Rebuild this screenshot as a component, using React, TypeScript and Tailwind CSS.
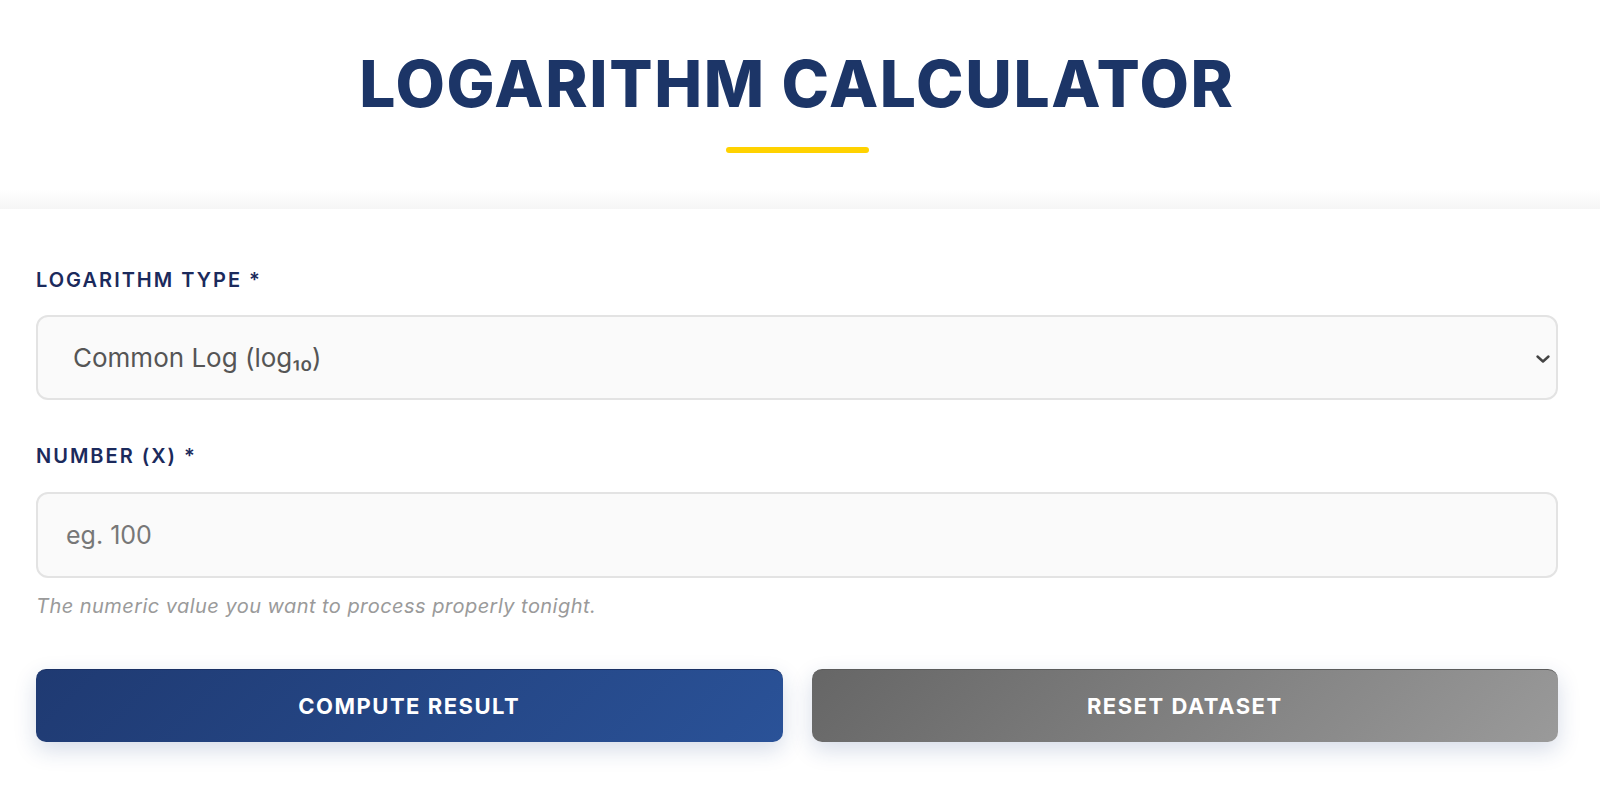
import React from "react";

export default function App() {
  const font = { fontFamily: "Inter, 'Noto Sans', sans-serif" } as React.CSSProperties;
  return (
    <div className="min-h-[791px] w-full bg-white" style={font}>
      <header className="h-[209px] bg-gradient-to-b from-white from-[91%] to-[#f5f5f5]">
        <div className="pl-[36px] pr-[42px] flex flex-col items-center">
          <h1 className="mt-[48px] text-[64px] leading-[72px] font-extrabold tracking-[1.7px] text-[#1c3567]">
            LOGARITHM CALCULATOR
          </h1>
          <div className="mt-[27px] h-[6px] w-[143px] rounded-full bg-[#ffd200]" />
        </div>
      </header>
      <main className="pl-[36px] pr-[42px] pt-[59px]">
        <label className="block text-[20px] leading-[24px] font-semibold tracking-[2px] text-[#1b2a5c]">
          LOGARITHM TYPE *
        </label>
        <div className="relative mt-[23px]">
          <select className="block w-full h-[85px] appearance-none rounded-[12px] border-2 border-[#e3e3e3] bg-[#fafafa] pl-[35px] text-[26px] text-[#555] outline-none">
            <option>Common Log (log₁₀)</option>
          </select>
          <svg className="pointer-events-none absolute right-[7px] top-[39px]" width="16" height="10" viewBox="0 0 16 10" fill="none">
            <path d="M2.5 2.5l5.5 5 5.5-5" stroke="#444" strokeWidth="2.4" strokeLinecap="round" strokeLinejoin="round" />
          </svg>
        </div>
        <label className="mt-[44px] block text-[20px] leading-[24px] font-semibold tracking-[2px] text-[#1b2a5c]">
          NUMBER (X) *
        </label>
        <input
          className="mt-[24px] block w-full h-[86px] rounded-[12px] border-2 border-[#e3e3e3] bg-[#fafafa] pl-[28px] text-[25px] text-[#555] placeholder:text-[#777] outline-none"
          placeholder="eg. 100"
        />
        <p className="mt-[16px] text-[20px] leading-[24px] italic tracking-[0.45px] text-[#9a9a9a]">
          The numeric value you want to process properly tonight.
        </p>
        <div className="mt-[51px] grid grid-cols-2 gap-[29px]">
          <button className="h-[73px] rounded-[10px] border-t border-[#1a3165] bg-linear-135 from-[#1f3a72] to-[#2a5298] text-white text-[22px] font-bold tracking-[1.5px] shadow-[0_8px_22px_rgba(30,60,130,0.18)]">
            COMPUTE RESULT
          </button>
          <button className="h-[73px] rounded-[10px] border-t border-[#5c5c5c] bg-linear-135 from-[#666666] to-[#9a9a9a] text-white text-[22px] font-bold tracking-[1.5px] shadow-[0_8px_22px_rgba(30,60,130,0.18)]">
            RESET DATASET
          </button>
        </div>
      </main>
    </div>
  );
}
